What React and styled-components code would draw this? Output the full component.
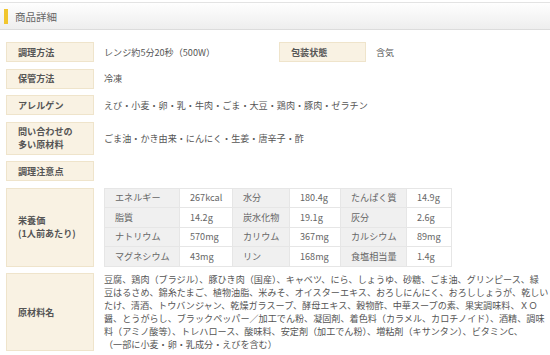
import React from 'react';
import styled, { createGlobalStyle } from 'styled-components';

const GlobalStyle = createGlobalStyle`
  body {
    margin: 0;
    background: #fff;
    font-family: "Noto Sans CJK JP", "Noto Sans", sans-serif;
    color: #555;
  }
`;

const Section = styled.section`
  padding-top: 2px;
`;

const Heading = styled.h2`
  display: flex;
  align-items: center;
  gap: 7px;
  height: 26px;
  margin: 0;
  padding-left: 4px;
  border-top: 1px solid #e3e3e3;
  border-bottom: 1px solid #dcdcdc;
  background: linear-gradient(#fefefe, #eeeeee);
  font-size: 10.5px;
  font-weight: normal;
  color: #666;

  &::before {
    content: '';
    width: 4px;
    height: 15px;
    background: #f1c62e;
  }
`;

const Body = styled.div`
  display: flex;
  flex-direction: column;
  gap: 6.5px;
  padding: 12px 6px 0;
  font-size: 9.1px;
  line-height: 13px;
`;

const Row = styled.div`
  display: flex;
  gap: 10px;
`;

const Label = styled.div`
  display: flex;
  align-items: center;
  flex: none;
  box-sizing: border-box;
  width: ${(p) => p.$w || 88}px;
  min-height: 20px;
  padding: 2.5px 6px 2.5px 11px;
  background: #f9f2e3;
  border: 1px solid #efe4cb;
  font-weight: bold;
  color: #555;
`;

const Value = styled.div`
  display: flex;
  align-items: center;
  width: ${(p) => (p.$w ? `${p.$w}px` : 'auto')};
  flex: ${(p) => (p.$w ? 'none' : '1')};
`;

const Lines = styled.div`
  span {
    display: block;
    white-space: nowrap;
  }
`;

const Nutrition = styled.table`
  border-collapse: collapse;
  table-layout: fixed;
  width: 347px;
  color: #666;

  td,
  th {
    height: 18.5px;
    padding: 0 0 0 10px;
    border: 1px solid #e6e6e6;
    text-align: left;
    font-weight: normal;
    white-space: nowrap;
  }

  th {
    background: #f0f0f0;
  }
`;

const nutrients = [
  ['エネルギー', '267kcal', '水分', '180.4g', 'たんぱく質', '14.9g'],
  ['脂質', '14.2g', '炭水化物', '19.1g', '灰分', '2.6g'],
  ['ナトリウム', '570mg', 'カリウム', '367mg', 'カルシウム', '89mg'],
  ['マグネシウム', '43mg', 'リン', '168mg', '食塩相当量', '1.4g'],
];

const colWidths = [75, 53, 57, 51, 66, 45];

const ingredients = [
  '豆腐、鶏肉（ブラジル）、豚ひき肉（国産）、キャベツ、にら、しょうゆ、砂糖、ごま油、グリンピース、緑',
  '豆はるさめ、錦糸たまご、植物油脂、米みそ、オイスターエキス、おろしにんにく、おろししょうが、乾しい',
  'たけ、清酒、トウバンジャン、乾燥ガラスープ、酵母エキス、穀物酢、中華スープの素、果実調味料、ＸＯ',
  '醤、とうがらし、ブラックペッパー／加工でん粉、凝固剤、着色料（カラメル、カロチノイド）、酒精、調味',
  '料（アミノ酸等）、トレハロース、酸味料、安定剤（加工でん粉）、増粘剤（キサンタン）、ビタミンC、',
  '（一部に小麦・卵・乳成分・えびを含む）',
];

const App = () => {
  return (
    <Section>
      <GlobalStyle />
      <Heading>商品詳細</Heading>
      <Body>
        <Row>
          <Label>調理方法</Label>
          <Value $w={165}>レンジ約5分20秒（500W）</Value>
          <Label $w={87}>包装状態</Label>
          <Value>含気</Value>
        </Row>
        <Row>
          <Label>保管方法</Label>
          <Value>冷凍</Value>
        </Row>
        <Row>
          <Label>アレルゲン</Label>
          <Value>えび・小麦・卵・乳・牛肉・ごま・大豆・鶏肉・豚肉・ゼラチン</Value>
        </Row>
        <Row>
          <Label>
            問い合わせの
            <br />
            多い原材料
          </Label>
          <Value>ごま油・かき由来・にんにく・生姜・唐辛子・酢</Value>
        </Row>
        <Row>
          <Label>調理注意点</Label>
          <Value />
        </Row>
        <Row>
          <Label>
            栄養価
            <br />
            (1人前あたり)
          </Label>
          <Value>
            <Nutrition>
              <colgroup>
                {colWidths.map((w, i) => (
                  <col key={i} style={{ width: w }} />
                ))}
              </colgroup>
              <tbody>
                {nutrients.map((r) => (
                  <tr key={r[0]}>
                    {r.map((cell, i) =>
                      i % 2 === 0 ? <th key={i}>{cell}</th> : <td key={i}>{cell}</td>
                    )}
                  </tr>
                ))}
              </tbody>
            </Nutrition>
          </Value>
        </Row>
        <Row>
          <Label>原材料名</Label>
          <Value>
            <Lines>
              {ingredients.map((line) => (
                <span key={line}>{line}</span>
              ))}
            </Lines>
          </Value>
        </Row>
      </Body>
    </Section>
  );
};

export default App;
